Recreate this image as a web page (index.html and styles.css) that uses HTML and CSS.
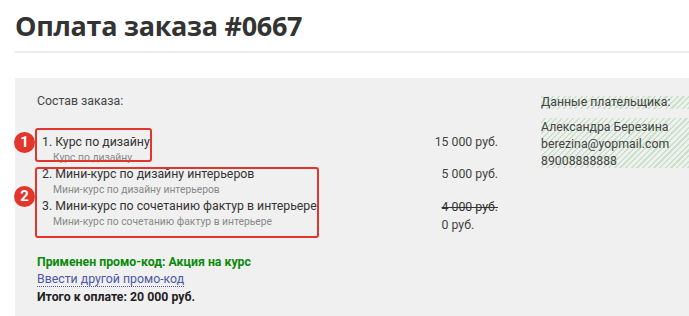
FILE: index.html
```html
<!DOCTYPE html>
<html lang="ru">
<head>
  <meta charset="UTF-8" />
  <title>Оплата заказа #0667</title>
  <link rel="stylesheet" href="styles.css">
</head>
<body>

<div class="page">
  <h1>Оплата заказа #0667</h1>
  <hr class="sep">

  <div class="panel">
    <div class="order">
      <div class="label">Состав заказа:</div>

      <div class="items">
        <div class="item">
          <div class="name">1. Курс по дизайну<span>Курс по дизайну</span></div>
          <div class="price">15 000 руб.</div>
        </div>
        <div class="item">
          <div class="name">2. Мини-курс по дизайну интерьеров<span>Мини-курс по дизайну интерьеров</span></div>
          <div class="price">5 000 руб.</div>
        </div>
        <div class="item">
          <div class="name">3. Мини-курс по сочетанию фактур в интерьере<span>Мини-курс по сочетанию фактур в интерьере</span></div>
          <div class="price"><div class="discount"><s>4 000 руб.</s>0 руб.</div></div>
        </div>
      </div>

      <div class="promo">
        <div class="applied">Применен промо-код: Акция на курс</div>
        <a href="#" class="other">Ввести другой промо-код</a>
        <div class="total">Итого к оплате: 20 000 руб.</div>
      </div>
    </div>

    <div class="payer">
      <div class="hatch">Данные плательщика:</div>
      <div class="hatch info">
        Александра Березина<br>
        berezina@yopmail.com<br>
        89008888888
      </div>
    </div>

    <!-- annotation marks -->
    <div class="mark m1"></div>
    <div class="mark m2"></div>
    <div class="badge b1">1</div>
    <div class="badge b2">2</div>
  </div>
</div>

</body>
</html>
```

FILE: styles.css
```css
body {
  margin: 0;
  background: #fff;
  font-family: Roboto, sans-serif;
  color: #333;
}

.page {
  padding-left: 15px;
}

h1 {
  margin: 0;
  padding-top: 9px;
  height: 42px;
  font-family: "Open Sans", sans-serif;
  font-size: 27px;
  font-weight: 700;
  color: #333;
  line-height: 34px;
  letter-spacing: -0.3px;
}

.sep {
  border: 0;
  border-top: 2px solid #ececec;
  margin: 0 0 25px 0;
}

.panel {
  position: relative;
  background: #f0f0f0;
  display: flex;
  padding: 14px 0 12px 22px;
}

.order {
  width: 461px;
  font-size: 12.3px;
}

.label {
  color: #444;
  line-height: 18px;
  margin-bottom: 24px;
}

.item {
  display: flex;
  height: 32px;
}

.name {
  flex: 1;
  padding-left: 5px;
  line-height: 16px;
  color: #333;
}

.name span {
  display: block;
  padding-left: 11px;
  font-size: 10.3px;
  color: #888;
}

.price {
  width: 70px;
  text-align: right;
  line-height: 16px;
  color: #444;
  white-space: nowrap;
}

.discount {
  display: inline-block;
  text-align: left;
  line-height: 18px;
}

.discount s {
  display: block;
  color: #333;
}

.promo {
  margin-top: 24px;
  line-height: 17px;
}

.applied {
  color: #0a8a0a;
  font-weight: 700;
}

.other {
  color: #4b57a6;
  text-decoration: none;
  border-bottom: 1px dotted #4b57a6;
}

.total {
  margin-top: 1px;
  font-weight: 700;
  color: #222;
}

.payer {
  flex: 1;
  margin-left: 43px;
  margin-top: 4px;
  font-size: 12.3px;
  color: #444;
}

.hatch {
  background: repeating-linear-gradient(-45deg, #c9e2c9 0 1.5px, transparent 1.5px 4px);
  line-height: 13px;
}

.info {
  margin-top: 9px;
  padding-top: 1px;
  line-height: 17px;
  height: 49px;
}

.mark {
  position: absolute;
  border: 2.5px solid #e2352c;
  border-radius: 3px;
}

.m1 { left: 20px; top: 50px; width: 113px; height: 30px; }
.m2 { left: 20px; top: 89px; width: 280px; height: 67px; }

.badge {
  position: absolute;
  width: 21px;
  height: 21px;
  border-radius: 50%;
  background: #e2352c;
  color: #fff;
  font-weight: 700;
  font-size: 15px;
  line-height: 21px;
  text-align: center;
}

.b1 { left: -1px; top: 54px; }
.b2 { left: -1px; top: 108px; }
```
